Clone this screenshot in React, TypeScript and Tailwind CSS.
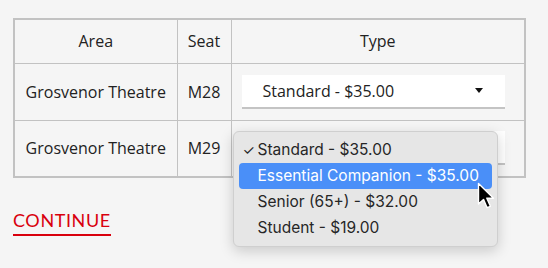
const rows = [
  { area: "Grosvenor Theatre", seat: "M28" },
  { area: "Grosvenor Theatre", seat: "M29" },
];

const options = [
  "Standard - $35.00",
  "Essential Companion - $35.00",
  "Senior (65+) - $32.00",
  "Student - $19.00",
];

function SelectBox({ open }: { open?: boolean }) {
  return (
    <div className="flex h-[34px] w-[263px] items-center justify-between border-b-2 border-[#c4c4c4] bg-white pl-[21px] pr-[22px]">
      <span>{open ? "" : "Standard - $35.00"}</span>
      <svg width="8" height="5" viewBox="0 0 8 5">
        <path d="M0 0h8L4 5z" fill="#111" />
      </svg>
    </div>
  );
}

function Cursor() {
  return (
    <svg
      width="20"
      height="28"
      viewBox="0 0 20 28"
      className="absolute left-[243px] top-[50px]"
    >
      <path
        d="M1.5 1.5v20.5l5-4.6 3.6 8.3 3.3-1.4-3.6-8.1h6.7z"
        fill="#000"
        stroke="#fff"
        strokeWidth="1.4"
        strokeLinejoin="round"
      />
    </svg>
  );
}

export default function App() {
  return (
    <div className="h-[268px] w-[548px] bg-[#f5f5f5] pl-[13px] pt-[18px] text-[16px] text-[#222] [font-family:'Open_Sans',sans-serif]">
      <table className="border-collapse border-2 border-[#c2c2c2]">
        <thead>
          <tr className="h-[44px]">
            <th className="w-[163px] border border-[#c2c2c2] font-normal">Area</th>
            <th className="w-[54px] border border-[#c2c2c2] font-normal">Seat</th>
            <th className="w-[294px] border border-[#c2c2c2] font-normal">Type</th>
          </tr>
        </thead>
        <tbody>
          {rows.map((r, i) => (
            <tr key={r.seat} className="h-[57px]">
              <td className="border border-[#c2c2c2] text-center">{r.area}</td>
              <td className="border border-[#c2c2c2] text-center">{r.seat}</td>
              <td className="relative border border-[#c2c2c2] pl-[10px]">
                <SelectBox open={i === 1} />
                {i === 1 && (
                  <div className="absolute left-[1px] top-[10px] z-10 w-[265px] rounded-[6px] border border-[#cfcfcf] bg-[#e6e6e6] px-[5px] py-[5px] text-[15.5px] text-[#262626] shadow-[0_4px_14px_rgba(0,0,0,0.18)] [font-family:Inter,sans-serif]">
                    {options.map((o, j) => (
                      <div
                        key={o}
                        className={
                          j === 1
                            ? "flex h-[26px] items-center rounded-[4px] bg-[#4a8ff8] pl-[19px] text-white"
                            : "flex h-[26px] items-center pl-[19px]"
                        }
                      >
                        {j === 0 && (
                          <span className="-ml-[15px] mr-[3px] w-[12px] text-[14px]">✓</span>
                        )}
                        {o}
                      </div>
                    ))}
                    <Cursor />
                  </div>
                )}
              </td>
            </tr>
          ))}
        </tbody>
      </table>
      <div className="mt-[31px] inline-block border-b-2 border-[#d9000d] pb-[3px] text-[18px] leading-[22px] tracking-[0.6px] text-[#d9000d] [font-family:Lato,sans-serif]">
        CONTINUE
      </div>
    </div>
  );
}
